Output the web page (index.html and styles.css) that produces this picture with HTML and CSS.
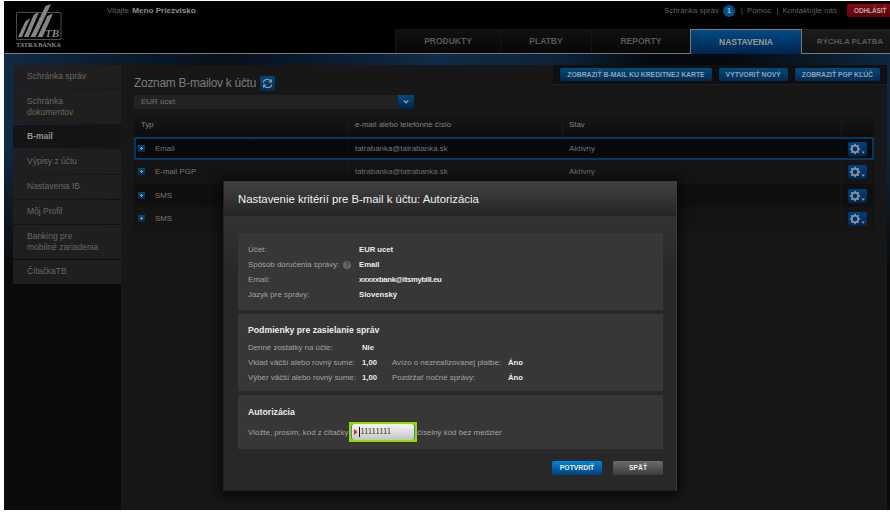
FILE: index.html
```html
<!DOCTYPE html>
<html lang="sk">
<head>
    <meta charset="UTF-8">
    <meta name="viewport" content="width=device-width, initial-scale=1.0">
    <title>Internet banking - B-mail</title>
    <link rel="stylesheet" href="styles.css">
</head>
<body>

<svg class="defs" width="0" height="0">
    <symbol id="gear" viewBox="0 0 19 14">
        <circle cx="7" cy="7" r="3.200" fill="none" stroke="#8c99a5" stroke-width="1.600"/>
        <path d="M7 1.800v2M7 10.200v2M1.800 7h2M10.200 7h2M3.300 3.300l1.500 1.500M9.200 9.200l1.500 1.500M3.300 10.700l1.500-1.500M9.200 4.800l1.500-1.500" stroke="#8c99a5" stroke-width="1.600"/>
        <path d="M13.500 9.500h3.400l-1.700 2.300z" fill="#8c99a5"/>
    </symbol>
</svg>

<div class="page">
    <header class="header">
        <svg class="logo" width="46" height="44" viewBox="0 0 46 44">
            <path d="M.5 8.500h44.500v27H.5z" fill="#000" stroke="#4c4c4c"/>
            <g fill="#858585">
                <path d="M2 33L9.500 17l4.500-2.500L6 33z"/>
                <path d="M8 33L18 10.500l5-2.500L12.500 33z"/>
                <path d="M14.500 33L29.500 2l5.500-2L19.500 33z"/>
                <path d="M21.500 33L31.500 12l5.500-2.500L26.500 33z"/>
            </g>
            <text x="29" y="33" class="logo-tb">TB</text>
            <text x="0" y="43" class="logo-name" textLength="45">TATRA BANKA</text>
        </svg>
        <div class="welcome">Vitajte <b>Meno Priezvisko</b></div>
        <div class="header-right">
            <div class="links">
                <span>Schránka správ</span>
                <span class="count">1</span>
                <i>|</i>
                <span>Pomoc</span>
                <i>|</i>
                <span>Kontaktujte nás</span>
                <a class="logout">ODHLÁSIŤ</a>
            </div>
            <nav class="nav">
                <a class="products">PRODUKTY</a>
                <a class="payments">PLATBY</a>
                <a class="reports">REPORTY</a>
                <a class="settings">NASTAVENIA</a>
                <a class="quick">RÝCHLA PLATBA</a>
            </nav>
        </div>
    </header>

    <div class="content">
        <aside class="sidebar">
            <a>Schránka správ</a>
            <a>Schránka<br>dokumentov</a>
            <a class="active">B-mail</a>
            <a>Výpisy z účtu</a>
            <a>Nastavenia IB</a>
            <a>Môj Profil</a>
            <a>Banking pre<br>mobilné zariadenia</a>
            <a>ČítačkaTB</a>
        </aside>

        <main class="main">
            <div class="main-top">
                <h1>Zoznam B-mailov k účtu</h1>
                <svg class="refresh" width="15" height="15" viewBox="0 0 15 15">
                    <path d="M3.200 6.600C3.600 4.400 5.300 3.400 7.400 3.400c1.400 0 2.600.5 3.400 1.500M11.800 8.400c-.4 2.200-2.100 3.200-4.200 3.200-1.400 0-2.600-.5-3.400-1.500" fill="none" stroke="#8c99a5" stroke-width="1.300"/>
                    <path d="M12 2.800v3.700H8.300zM3 12.200V8.500h3.700z" fill="#8c99a5"/>
                </svg>
                <div class="actions">
                    <a>ZOBRAZIŤ B-MAIL KU KREDITNEJ KARTE</a>
                    <a>VYTVORIŤ NOVÝ</a>
                    <a>ZOBRAZIŤ PGP KĽÚČ</a>
                </div>
            </div>
            <div class="select">
                <span>EUR ucet</span>
                <svg width="16" height="14" viewBox="0 0 16 14"><path d="M5.700 5.500l2.300 2.300 2.300-2.300" fill="none" stroke="#8c99a5" stroke-width="1.400"/></svg>
            </div>
            <div class="table">
                <div class="row head"><span>Typ</span><span>e-mail alebo telefónne číslo</span><span>Stav</span><span></span></div>
                <div class="row selected"><span><i class="plus"></i>Email</span><span>tatrabanka@tatrabanka.sk</span><span>Aktívny</span><span><svg class="gear"><use href="#gear"/></svg></span></div>
                <div class="row"><span><i class="plus"></i>E-mail PGP</span><span>tatrabanka@tatrabanka.sk</span><span>Aktívny</span><span><svg class="gear"><use href="#gear"/></svg></span></div>
                <div class="row dark"><span><i class="plus"></i>SMS</span><span></span><span></span><span><svg class="gear"><use href="#gear"/></svg></span></div>
                <div class="row"><span><i class="plus"></i>SMS</span><span></span><span></span><span><svg class="gear"><use href="#gear"/></svg></span></div>
            </div>
        </main>
    </div>

    <div class="dialog">
        <h2>Nastavenie kritérií pre B-mail k účtu: Autorizácia</h2>
        <div class="dialog-body">
            <section class="account">
                <span>Účet:</span><b>EUR ucet</b>
                <span>Spôsob doručenia správy: <i class="help">?</i></span><b>Email</b>
                <span>Email:</span><b class="mail">xxxxxbank@itsmybill.eu</b>
                <span>Jazyk pre správy:</span><b>Slovenský</b>
            </section>
            <section class="conditions">
                <h3>Podmienky pre zasielanie správ</h3>
                <div class="conditions-grid">
                    <span>Denné zostatky na účte:</span><b>Nie</b><span></span><b></b>
                    <span>Vklad väčší alebo rovný sume:</span><b>1,00</b><span>Avízo o nezrealizovanej platbe:</span><b>Áno</b>
                    <span>Výber väčší alebo rovný sume:</span><b>1,00</b><span>Pozdržať nočné správy:</span><b>Áno</b>
                </div>
            </section>
            <section class="auth">
                <h3>Autorizácia</h3>
                <div class="code">
                    <span class="code-label">Vložte, prosím, kód z čítačky</span>
                    <div class="highlight">
                        <div class="field">
                            <svg width="4" height="6" viewBox="0 0 4 6"><path d="M0 0l3.500 3L0 6z" fill="#d8202c"/></svg>
                            <span class="value">11111111</span>
                        </div>
                    </div>
                    <span>číselný kód bez medzier</span>
                </div>
            </section>
            <div class="buttons">
                <a class="confirm">POTVRDIŤ</a>
                <a class="back">SPÄŤ</a>
            </div>
        </div>
    </div>
</div>

</body>
</html>
```
FILE: styles.css
```css
* {
    box-sizing: border-box;
}
body {
    margin: 0;
    padding: 1px 0 2px 4px;
    height: 512px;
    overflow: hidden;
    background: #fff;
    font: 8px/11px "Liberation Sans", Arial, sans-serif;
    color: #757575;
}
i {
    font-style: normal;
}
.defs {
    position: absolute;
}
.page {
    position: relative;
    width: 886px;
    height: 509px;
    overflow: hidden;
    background: #0b0b0b;
}

/* header */
.header {
    display: flex;
    height: 53px;
    background: #000;
    border-bottom: 1px solid #77777a;
}
.logo {
    flex: none;
    margin: 3px 0 0 12px;
}
.logo-tb {
    font: italic bold 11px "Liberation Serif", serif;
    fill: #858585;
}
.logo-name {
    font: bold 6.5px "Liberation Serif", serif;
    fill: #858585;
}
.welcome {
    margin: 4px 0 0 45px;
    color: #626262;
}
.welcome b {
    margin-left: 1px;
    color: #909090;
    font-size: 8.1px;
}
.header-right {
    flex: none;
    width: 495px;
    margin-left: auto;
}
.links {
    display: flex;
    align-items: center;
    height: 19px;
    margin-left: 269px;
    white-space: nowrap;
    color: #626262;
    font-size: 7.9px;
}
.links > * {
    flex: none;
}
.links .count {
    width: 12px;
    height: 12px;
    margin: 0 6px 0 4px;
    border-radius: 6px;
    background: #00508a;
    color: #a8a8a8;
    font-weight: bold;
    line-height: 12px;
    text-align: center;
}
.links i {
    margin-right: 4px;
}
.links i + span {
    margin-right: 5px;
}
.links .logout {
    width: 45px;
    height: 13px;
    margin-left: 5px;
    padding-left: 7px;
    border-radius: 2px;
    background: linear-gradient(#850a12, #62000a);
    color: #adadad;
    font: bold 6.5px/14px "Liberation Sans", Arial, sans-serif;
    letter-spacing: -.1px;
}
.nav {
    display: flex;
    height: 33px;
    margin-top: 9px;
}
.nav a {
    height: 24px;
    border-left: 1px solid #151515;
    background: linear-gradient(#111, #070707);
    color: #585858;
    font-size: 8.5px;
    font-weight: bold;
    line-height: 25px;
    text-align: center;
}
.nav .products {
    width: 105px;
}
.nav .payments {
    width: 91px;
}
.nav .reports {
    width: 99px;
}
.nav .settings {
    width: 112px;
    height: 25px;
    border: 1px solid #77777a;
    border-bottom: 0;
    background: linear-gradient(#004983, #00254e);
    color: #999;
    line-height: 24px;
}
.nav .quick {
    width: 88px;
    padding-left: 15px;
    border: 0;
    background: linear-gradient(#1c1c1c, #131313);
    font-size: 7.9px;
    line-height: 25px;
    text-align: left;
    white-space: nowrap;
}

/* content */
.content {
    display: flex;
    height: 456px;
    padding: 11px 3px 0 9px;
    background:
        linear-gradient(rgba(11, 11, 11, 0) 90px, #0b0b0b 210px),
        linear-gradient(90deg, #102b44, #0a1c2d 110px, #06111b 220px, #0b2037 360px, #102b48 430px, #0c2238 560px, #05090d 650px, #05090d 720px, #0d2740 886px);
}
.sidebar {
    flex: none;
    width: 108px;
}
.sidebar a {
    display: block;
    height: 24px;
    margin-bottom: 1px;
    padding: 6px 0 0 14px;
    border-bottom: 1px solid #1a1c1e;
    background: #1f1f1f;
    color: #686868;
    font-size: 8.5px;
    line-height: 11px;
}
.sidebar a:nth-child(2),
.sidebar a:nth-child(7) {
    height: 34px;
}
.sidebar .active {
    background: #141414;
    color: #929292;
    font-weight: bold;
}
.main {
    flex: 1;
    padding-left: 13px;
    background: #171717;
}
.main-top {
    display: flex;
    height: 30px;
}
.main h1 {
    margin: 10px 4px 0 0;
    color: #7c7c7c;
    font-size: 11.9px;
    font-weight: normal;
    line-height: 16px;
    letter-spacing: -.25px;
}
.refresh {
    margin-top: 11px;
    border-radius: 2px;
    background: linear-gradient(#004a7c, #002b55);
}
.actions {
    display: flex;
    gap: 7px;
    height: 20px;
    margin-left: auto;
    padding: 3px 7px 0;
    border-bottom: 1px solid #1e1e1e;
    background: #0f0f0f;
}
.actions a {
    height: 13px;
    padding: 0 7px;
    border-radius: 2px;
    background: linear-gradient(#004a7c, #002b55);
    color: #94a1ac;
    font-size: 6.8px;
    font-weight: bold;
    line-height: 13px;
    white-space: nowrap;
}
.select {
    display: flex;
    width: 280px;
    height: 14px;
    background: #222;
    line-height: 14px;
}
.select span {
    flex: 1;
    padding-left: 7px;
}
.select svg {
    background: linear-gradient(#004a7c, #00244a);
}
.table {
    width: 740px;
    margin-top: 4px;
    font-size: 7.9px;
}
.row {
    display: grid;
    grid-template-columns: 215px 214px 279px 1fr;
    height: 23.500px;
    background: #141414;
    line-height: 23px;
}
.row span {
    padding-left: 6px;
    border-right: 1px solid #191919;
}
.row span:first-child {
    display: flex;
    align-items: center;
    padding-left: 4px;
}
.row span:last-child {
    border: 0;
    padding: 5px 0 0 6px;
}
.head {
    background: linear-gradient(#171717, #0d0d0d);
    color: #808080;
    line-height: 24px;
}
.head span:first-child {
    padding-left: 7px;
}
.selected {
    background: #080808;
    outline: 2px solid #003a64;
    outline-offset: -2px;
}
.selected span {
    border-color: #0d0d0d;
}
.dark {
    background: #0f0f0f;
}
.plus {
    width: 7px;
    height: 7px;
    margin-right: 10px;
    background:
        linear-gradient(#8c99a5, #8c99a5) center / 3px 1px no-repeat,
        linear-gradient(#8c99a5, #8c99a5) center / 1px 3px no-repeat,
        linear-gradient(#004a7c, #002b55);
}
.gear {
    display: block;
    width: 19px;
    height: 14px;
    border-radius: 2px;
    background: linear-gradient(#00427a, #002550);
}

/* dialog */
.dialog {
    position: absolute;
    left: 219px;
    top: 180px;
    width: 454px;
    height: 310px;
    border: 1px solid #3a3a3a;
    border-left-color: #222;
    border-bottom-color: #222;
    background: linear-gradient(#393939, #282828 90px);
    box-shadow: 0 2px 12px 4px rgba(0, 0, 0, .6);
    color: #a2a2a2;
    font-size: 7.9px;
}
.dialog h2 {
    height: 34px;
    margin: 0;
    padding-left: 14px;
    background: linear-gradient(#414141, #242424);
    color: #f0f0f0;
    font-size: 11.350px;
    font-weight: normal;
    line-height: 35px;
}
.dialog-body {
    padding: 17px 13px 0 14px;
}
.dialog section {
    margin-bottom: 4px;
    padding: 0 10px;
    background: #373737;
}
.dialog b {
    color: #ececec;
    font-size: 7.700px;
}
.account {
    display: grid;
    grid-template-columns: 111px 1fr;
    align-content: start;
    grid-auto-rows: 15px;
    height: 77px;
    line-height: 15px;
}
.dialog .account {
    padding-top: 9px;
}
.dialog .mail {
    letter-spacing: -.3px;
}
.help {
    display: inline-block;
    width: 8px;
    height: 8px;
    margin-left: 2px;
    border-radius: 50%;
    background: #666;
    color: #373737;
    font: bold 7px/8px "Liberation Sans", Arial, sans-serif;
    text-align: center;
}
.dialog h3 {
    margin: 0;
    padding-top: 10px;
    color: #ececec;
    font-size: 8.700px;
    font-weight: bold;
    line-height: 13px;
}
.conditions {
    height: 77px;
}
.conditions-grid {
    display: grid;
    grid-template-columns: 114px 30px 116px 1fr;
    grid-auto-rows: 15px;
    padding-top: 3px;
    line-height: 15px;
}
.auth {
    height: 54px;
}
.dialog .auth h3 {
    padding-top: 11px;
}
.code {
    display: flex;
    align-items: center;
    height: 20px;
    margin-top: 3px;
}
.code-label {
    width: 101px;
    white-space: nowrap;
}
.highlight {
    width: 68px;
    height: 20px;
    padding: 2px;
    background: #98d800;
}
.field {
    display: flex;
    align-items: center;
    height: 16px;
    padding-left: 2px;
    border: 1px solid #2b8bb5;
    border-width: 0 1px;
    border-radius: 3px;
    background: linear-gradient(#f6f6f6, #c4c4c4);
    color: #444;
    font: 8px/10px "DejaVu Serif", serif;
    letter-spacing: -1.300px;
}
.value {
    margin-left: 1px;
    border-left: 1px solid #111;
}
.buttons {
    display: flex;
    justify-content: flex-end;
    gap: 11px;
    padding-top: 8px;
}
.buttons a {
    width: 50px;
    height: 14px;
    border-radius: 2px;
    background: linear-gradient(#0086dc, #004078);
    color: #eee;
    font-size: 6.800px;
    font-weight: bold;
    line-height: 14px;
    text-align: center;
}
.buttons .back {
    background: linear-gradient(#6c6c6c, #3c3c3c);
}
```
